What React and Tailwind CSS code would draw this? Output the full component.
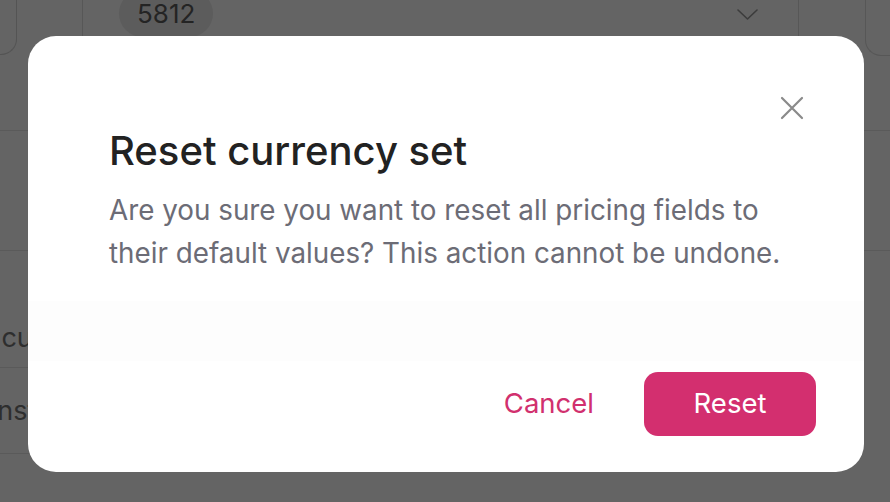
import React from 'react';

const CloseIcon = () => (
    <svg width="24" height="24" viewBox="0 0 24 24" fill="none">
        <path d="M2 2L22 22M22 2L2 22" stroke="#8a8a8a" strokeWidth="2.2" strokeLinecap="round" />
    </svg>
);

const Chevron = () => (
    <svg width="21" height="11" viewBox="0 0 21 11" fill="none">
        <path d="M1 1L10.5 10L20 1" stroke="#3c3c3c" strokeWidth="1.6" strokeLinecap="round" strokeLinejoin="round" />
    </svg>
);

const App = () => {
    return (
        <div className="relative h-[502px] w-[890px] overflow-hidden bg-[#646464] font-['Inter','Noto_Sans',sans-serif]">
            {/* page behind the dialog, dimmed */}
            <div className="flex flex-col">
                <div className="flex h-[56px] items-start">
                    <div className="h-[55px] w-[17px] shrink-0 rounded-br-[16px] border-b border-r border-[#545454]" />
                    <div className="ml-[65px] flex h-[56px] w-[717px] shrink-0 items-start justify-between border-x border-[#575757] pl-[36px] pr-[40px]">
                        <div className="-mt-[10px] flex h-[47px] items-center rounded-full bg-[#5c5c5c] px-[18px] text-[26px] text-[#242424]">
                            5812
                        </div>
                        <div className="mt-[9px]">
                            <Chevron />
                        </div>
                    </div>
                    <div className="ml-[66px] h-[56px] flex-1 rounded-bl-[16px] border-b border-l border-[#575757]" />
                </div>
                <div className="mt-[74px] border-t border-[#5a5a5a]" />
                <div className="mt-[119px] border-t border-[#5a5a5a]" />
                <div className="w-[420px]">
                    <div className="flex h-[117px] items-end border-b border-[#5a5a5a] pb-[14px]">
                        <span className="-ml-[69px] whitespace-nowrap text-[27px] leading-[30px] text-[#2e2e2e]">Base currency</span>
                    </div>
                    <div className="flex h-[86px] items-center border-b border-[#5a5a5a]">
                        <span className="-ml-[44px] whitespace-nowrap text-[27px] leading-[30px] text-[#2e2e2e]">Transfers</span>
                    </div>
                </div>
            </div>

            {/* dialog */}
            <div className="absolute left-[28px] top-[36px] flex h-[436px] w-[836px] flex-col rounded-[28px] bg-white">
                <button className="absolute right-[60px] top-[60px]">
                    <CloseIcon />
                </button>
                <div className="px-[81px] pt-[92px]">
                    <h2 className="text-[40px] font-medium leading-[46px] text-[#222222]">Reset currency set</h2>
                    <p className="mt-[15px] text-[27.8px] leading-[43px] text-[#6c6c76]">
                        Are you sure you want to reset all pricing fields to their default values? This action cannot be undone.
                    </p>
                </div>
                <div className="mt-[26px] h-[60px] bg-[#fdfdfd]" />
                <div className="mt-[11px] flex items-center justify-end gap-[50px] pr-[48px]">
                    <button className="text-[27.5px] text-[#d1306e]">Cancel</button>
                    <button className="flex h-[64px] w-[172px] items-center justify-center rounded-[14px] bg-[#d32f6f] text-[27.5px] text-white">
                        Reset
                    </button>
                </div>
            </div>
        </div>
    );
};

export default App;
